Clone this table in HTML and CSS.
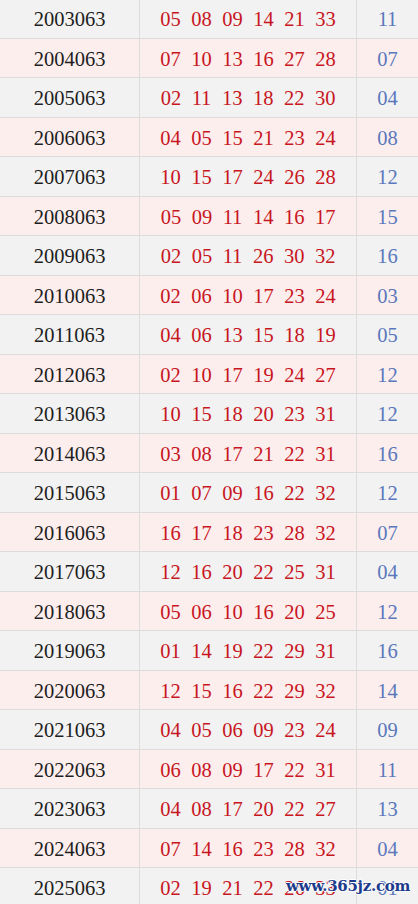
FILE: index.html
```html
<!DOCTYPE html>
<html lang="zh">
<head>
  <meta charset="UTF-8" />
  <meta name="viewport" content="width=device-width, initial-scale=1.0" />
  <title>历年同期开奖</title>
  <link rel="stylesheet" href="styles.css">
</head>
<body>
  <div class="list">
    <div class="row"><span class="qi">2003063</span><span class="red"><i>05</i><i>08</i><i>09</i><i>14</i><i>21</i><i>33</i></span><span class="blue">11</span></div>
    <div class="row"><span class="qi">2004063</span><span class="red"><i>07</i><i>10</i><i>13</i><i>16</i><i>27</i><i>28</i></span><span class="blue">07</span></div>
    <div class="row"><span class="qi">2005063</span><span class="red"><i>02</i><i>11</i><i>13</i><i>18</i><i>22</i><i>30</i></span><span class="blue">04</span></div>
    <div class="row"><span class="qi">2006063</span><span class="red"><i>04</i><i>05</i><i>15</i><i>21</i><i>23</i><i>24</i></span><span class="blue">08</span></div>
    <div class="row"><span class="qi">2007063</span><span class="red"><i>10</i><i>15</i><i>17</i><i>24</i><i>26</i><i>28</i></span><span class="blue">12</span></div>
    <div class="row"><span class="qi">2008063</span><span class="red"><i>05</i><i>09</i><i>11</i><i>14</i><i>16</i><i>17</i></span><span class="blue">15</span></div>
    <div class="row"><span class="qi">2009063</span><span class="red"><i>02</i><i>05</i><i>11</i><i>26</i><i>30</i><i>32</i></span><span class="blue">16</span></div>
    <div class="row"><span class="qi">2010063</span><span class="red"><i>02</i><i>06</i><i>10</i><i>17</i><i>23</i><i>24</i></span><span class="blue">03</span></div>
    <div class="row"><span class="qi">2011063</span><span class="red"><i>04</i><i>06</i><i>13</i><i>15</i><i>18</i><i>19</i></span><span class="blue">05</span></div>
    <div class="row"><span class="qi">2012063</span><span class="red"><i>02</i><i>10</i><i>17</i><i>19</i><i>24</i><i>27</i></span><span class="blue">12</span></div>
    <div class="row"><span class="qi">2013063</span><span class="red"><i>10</i><i>15</i><i>18</i><i>20</i><i>23</i><i>31</i></span><span class="blue">12</span></div>
    <div class="row"><span class="qi">2014063</span><span class="red"><i>03</i><i>08</i><i>17</i><i>21</i><i>22</i><i>31</i></span><span class="blue">16</span></div>
    <div class="row"><span class="qi">2015063</span><span class="red"><i>01</i><i>07</i><i>09</i><i>16</i><i>22</i><i>32</i></span><span class="blue">12</span></div>
    <div class="row"><span class="qi">2016063</span><span class="red"><i>16</i><i>17</i><i>18</i><i>23</i><i>28</i><i>32</i></span><span class="blue">07</span></div>
    <div class="row"><span class="qi">2017063</span><span class="red"><i>12</i><i>16</i><i>20</i><i>22</i><i>25</i><i>31</i></span><span class="blue">04</span></div>
    <div class="row"><span class="qi">2018063</span><span class="red"><i>05</i><i>06</i><i>10</i><i>16</i><i>20</i><i>25</i></span><span class="blue">12</span></div>
    <div class="row"><span class="qi">2019063</span><span class="red"><i>01</i><i>14</i><i>19</i><i>22</i><i>29</i><i>31</i></span><span class="blue">16</span></div>
    <div class="row"><span class="qi">2020063</span><span class="red"><i>12</i><i>15</i><i>16</i><i>22</i><i>29</i><i>32</i></span><span class="blue">14</span></div>
    <div class="row"><span class="qi">2021063</span><span class="red"><i>04</i><i>05</i><i>06</i><i>09</i><i>23</i><i>24</i></span><span class="blue">09</span></div>
    <div class="row"><span class="qi">2022063</span><span class="red"><i>06</i><i>08</i><i>09</i><i>17</i><i>22</i><i>31</i></span><span class="blue">11</span></div>
    <div class="row"><span class="qi">2023063</span><span class="red"><i>04</i><i>08</i><i>17</i><i>20</i><i>22</i><i>27</i></span><span class="blue">13</span></div>
    <div class="row"><span class="qi">2024063</span><span class="red"><i>07</i><i>14</i><i>16</i><i>23</i><i>28</i><i>32</i></span><span class="blue">04</span></div>
    <div class="row"><span class="qi">2025063</span><span class="red"><i>02</i><i>19</i><i>21</i><i>22</i><i>26</i><i>33</i></span><span class="blue">01</span></div>
  </div>
  <div class="watermark">www.365jz.com</div>
</body>
</html>
```

FILE: styles.css
```css
* { box-sizing: border-box; }
body {
  margin: -1px 0 0 0; padding: 0;
  background: #fff;
  font-family: 'Liberation Serif', 'Noto Sans CJK SC', serif;
  overflow: hidden;
}

.list { width: 418px; }

.row {
  display: grid;
  grid-template-columns: 140px 217px 1fr;
  height: 39.5px;
  border-bottom: 1px solid #dcdcdc;
  background: #f2f2f2;
}
.row:nth-child(even) { background: #fdeeee; }

.row > span {
  display: flex; align-items: center;
  justify-content: center;
  padding-top: 3px;
  font-size: 20.5px;
  border-right: 1px solid #dcdcdc;
}
.row > span:last-child { border-right: none; }

.qi { color: #1e1e1e; }
.red { color: #c8161e; gap: 10.5px; }
.red i { font-style: normal; }
.blue { color: #5a78bc; }

.watermark {
  position: absolute; right: 8px; bottom: 9px;
  font-family: 'DejaVu Serif', serif;
  font-weight: bold; font-size: 15px;
  color: #1d3b8c; letter-spacing: -0.3px;
  text-shadow: -1px 0 #fff, 1px 0 #fff, 0 -1px #fff, 0 1px #fff;
}
```
